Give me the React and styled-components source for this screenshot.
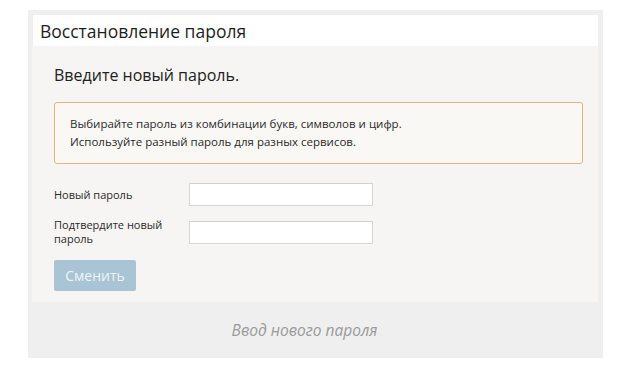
import React from "react";
import styled, { createGlobalStyle } from "styled-components";

const Global = createGlobalStyle`
  html, body { margin: 0; padding: 0; background: #ffffff; }
  body { font-family: "Open Sans", "Noto Sans", sans-serif; }
`;

const Page = styled.div`
  padding: 10px 19px 10px 28px;
  width: 575px;
`;

const Frame = styled.div`
  background: #efefef;
  padding: 5px 5px 0 5px;
  display: flex;
  flex-direction: column;
`;

const Header = styled.div`
  background: #ffffff;
  height: 31px;
  display: flex;
  align-items: center;
  padding-left: 7px;
  font-size: 17.5px;
  color: #1e1e1e;
`;

const Panel = styled.div`
  background: #f6f5f3;
  margin-left: -1px;
  padding: 18px 15px 11px 22px;
  display: flex;
  flex-direction: column;
`;

const Lead = styled.div`
  font-size: 16px;
  color: #222;
  line-height: 22px;
  margin-bottom: 16px;
`;

const Notice = styled.div`
  border: 1px solid #e3b57a;
  border-radius: 3px;
  background: #f9f8f5;
  padding: 12px 15px 12px 15px;
  font-size: 11.5px;
  line-height: 18px;
  color: #2a2a2a;
  margin-bottom: 19px;
`;

const Row = styled.div`
  display: grid;
  grid-template-columns: 135px 184px;
  align-items: center;
  margin-bottom: ${(p) => p.$gap}px;
`;

const Label = styled.label`
  font-size: 11px;
  line-height: 14px;
  color: #2a2a2a;
`;

const Input = styled.input`
  box-sizing: border-box;
  height: 23px;
  width: 184px;
  border: 1px solid #d6d6d6;
  border-top-color: #cfcfcf;
  background: #fff;
  margin: 0;
  padding: 0 4px;
`;

const Button = styled.button`
  width: 82px;
  height: 31px;
  border: none;
  border-radius: 2px;
  background: #a9c4d4;
  color: #eef4f8;
  font-family: "Open Sans", "Noto Sans", sans-serif;
  font-size: 14px;
  padding: 0;
  margin-top: 14px;
`;

const Caption = styled.div`
  height: 56px;
  display: flex;
  align-items: center;
  justify-content: center;
  padding-right: 22px;
  font-style: italic;
  font-size: 15.5px;
  color: #9a9a9a;
`;

export default function App() {
  return (
    <>
      <Global />
      <Page>
        <Frame>
          <Header>Восстановление пароля</Header>
          <Panel>
            <Lead>Введите новый пароль.</Lead>
            <Notice>
              Выбирайте пароль из комбинации букв, символов и цифр.
              <br />
              Используйте разный пароль для разных сервисов.
            </Notice>
            <Row $gap={12}>
              <Label>Новый пароль</Label>
              <Input type="password" />
            </Row>
            <Row $gap={0}>
              <Label>
                Подтвердите новый
                <br />
                пароль
              </Label>
              <Input type="password" />
            </Row>
            <div>
              <Button>Сменить</Button>
            </div>
          </Panel>
          <Caption>Ввод нового пароля</Caption>
        </Frame>
      </Page>
    </>
  );
}
